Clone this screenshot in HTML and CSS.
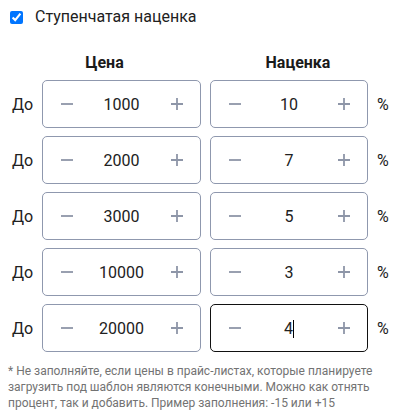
FILE: index.html
```html
<!DOCTYPE html>
<html lang="ru">
<head>
<meta charset="utf-8">
<link rel="stylesheet" href="styles.css">
</head>
<body>
<div class="page">
  <label class="check"><input class="check__box" type="checkbox" checked><span>Ступенчатая наценка</span></label>
  <div class="heads">
    <div class="heads__price">Цена</div>
    <div class="heads__markup">Наценка</div>
  </div>
  <div class="rows">
    <div class="row">
      <span class="row__label">До</span>
      <div class="stepper stepper--price">
        <span class="stepper__btn"><svg width="12" height="12" viewBox="0 0 12 12"><path d="M0 6h12" /></svg></span>
        <span class="stepper__value">1000</span>
        <span class="stepper__btn"><svg width="12" height="12" viewBox="0 0 12 12"><path d="M0 6h12M6 0v12" /></svg></span>
      </div>
      <div class="stepper stepper--markup">
        <span class="stepper__btn"><svg width="12" height="12" viewBox="0 0 12 12"><path d="M0 6h12" /></svg></span>
        <span class="stepper__value">10</span>
        <span class="stepper__btn"><svg width="12" height="12" viewBox="0 0 12 12"><path d="M0 6h12M6 0v12" /></svg></span>
      </div>
      <span class="row__unit">%</span>
    </div>
    <div class="row">
      <span class="row__label">До</span>
      <div class="stepper stepper--price">
        <span class="stepper__btn"><svg width="12" height="12" viewBox="0 0 12 12"><path d="M0 6h12" /></svg></span>
        <span class="stepper__value">2000</span>
        <span class="stepper__btn"><svg width="12" height="12" viewBox="0 0 12 12"><path d="M0 6h12M6 0v12" /></svg></span>
      </div>
      <div class="stepper stepper--markup">
        <span class="stepper__btn"><svg width="12" height="12" viewBox="0 0 12 12"><path d="M0 6h12" /></svg></span>
        <span class="stepper__value">7</span>
        <span class="stepper__btn"><svg width="12" height="12" viewBox="0 0 12 12"><path d="M0 6h12M6 0v12" /></svg></span>
      </div>
      <span class="row__unit">%</span>
    </div>
    <div class="row">
      <span class="row__label">До</span>
      <div class="stepper stepper--price">
        <span class="stepper__btn"><svg width="12" height="12" viewBox="0 0 12 12"><path d="M0 6h12" /></svg></span>
        <span class="stepper__value">3000</span>
        <span class="stepper__btn"><svg width="12" height="12" viewBox="0 0 12 12"><path d="M0 6h12M6 0v12" /></svg></span>
      </div>
      <div class="stepper stepper--markup">
        <span class="stepper__btn"><svg width="12" height="12" viewBox="0 0 12 12"><path d="M0 6h12" /></svg></span>
        <span class="stepper__value">5</span>
        <span class="stepper__btn"><svg width="12" height="12" viewBox="0 0 12 12"><path d="M0 6h12M6 0v12" /></svg></span>
      </div>
      <span class="row__unit">%</span>
    </div>
    <div class="row">
      <span class="row__label">До</span>
      <div class="stepper stepper--price">
        <span class="stepper__btn"><svg width="12" height="12" viewBox="0 0 12 12"><path d="M0 6h12" /></svg></span>
        <span class="stepper__value">10000</span>
        <span class="stepper__btn"><svg width="12" height="12" viewBox="0 0 12 12"><path d="M0 6h12M6 0v12" /></svg></span>
      </div>
      <div class="stepper stepper--markup">
        <span class="stepper__btn"><svg width="12" height="12" viewBox="0 0 12 12"><path d="M0 6h12" /></svg></span>
        <span class="stepper__value">3</span>
        <span class="stepper__btn"><svg width="12" height="12" viewBox="0 0 12 12"><path d="M0 6h12M6 0v12" /></svg></span>
      </div>
      <span class="row__unit">%</span>
    </div>
    <div class="row">
      <span class="row__label">До</span>
      <div class="stepper stepper--price">
        <span class="stepper__btn"><svg width="12" height="12" viewBox="0 0 12 12"><path d="M0 6h12" /></svg></span>
        <span class="stepper__value">20000</span>
        <span class="stepper__btn"><svg width="12" height="12" viewBox="0 0 12 12"><path d="M0 6h12M6 0v12" /></svg></span>
      </div>
      <div class="stepper stepper--markup stepper--focus">
        <span class="stepper__btn"><svg width="12" height="12" viewBox="0 0 12 12"><path d="M0 6h12" /></svg></span>
        <span class="stepper__value">4<span class="caret"></span></span>
        <span class="stepper__btn"><svg width="12" height="12" viewBox="0 0 12 12"><path d="M0 6h12M6 0v12" /></svg></span>
      </div>
      <span class="row__unit">%</span>
    </div>
  </div>
  <p class="note">* Не заполняйте, если цены в прайс-листах, которые планируете загрузить под шаблон являются конечными. Можно как отнять процент, так и добавить. Пример заполнения: -15 или +15</p>
</div>
</body>
</html>
```
FILE: styles.css
```css
* { box-sizing: border-box; }
html, body { margin: 0; padding: 0; background: #fff; }
body {
  font-family: Roboto, "Noto Sans", sans-serif;
  color: #212121;
  width: 401px;
}
.page {
  padding: 5px 8px 0 8px;
}
.check {
  display: flex;
  align-items: center;
  height: 24px;
  font-size: 16px;
  line-height: 20px;
  color: #212121;
}
.check__box {
  margin: 0 12px 0 2px;
  width: 13px;
  height: 13px;
}
.heads {
  display: flex;
  margin-top: 24px;
  font-size: 16px;
  line-height: 20px;
  font-weight: 700;
  color: #1a1a1a;
}
.heads__price {
  width: 193px;
  text-align: center;
}
.heads__markup {
  width: 176px;
  margin-left: 9px;
  text-align: center;
}
.rows {
  margin-top: 7px;
  display: flex;
  flex-direction: column;
  gap: 8px;
}
.row {
  display: flex;
  align-items: center;
  height: 48px;
  font-size: 16px;
}
.row__label {
  width: 34px;
  padding-left: 4px;
}
.row__unit {
  margin-left: 9px;
}
.stepper {
  display: flex;
  align-items: center;
  height: 48px;
  border: 1px solid #8f98ae;
  border-radius: 5px;
}
.stepper--price { width: 159px; }
.stepper--markup { width: 158px; margin-left: 9px; }
.stepper--focus { border-color: #111; }
.stepper__btn {
  width: 47px;
  flex: none;
  display: flex;
  justify-content: center;
  align-items: center;
}
.stepper__btn svg {
  display: block;
  stroke: #8e96a8;
  stroke-width: 1.8;
  fill: none;
}
.stepper__value {
  flex: 1;
  text-align: center;
  font-size: 16px;
  color: #212121;
}
.caret {
  display: inline-block;
  width: 1px;
  height: 18px;
  background: #000;
  vertical-align: -4px;
}
.note {
  margin: 11px 0 0 0;
  font-size: 12px;
  line-height: 16px;
  color: #737373;
}
```
